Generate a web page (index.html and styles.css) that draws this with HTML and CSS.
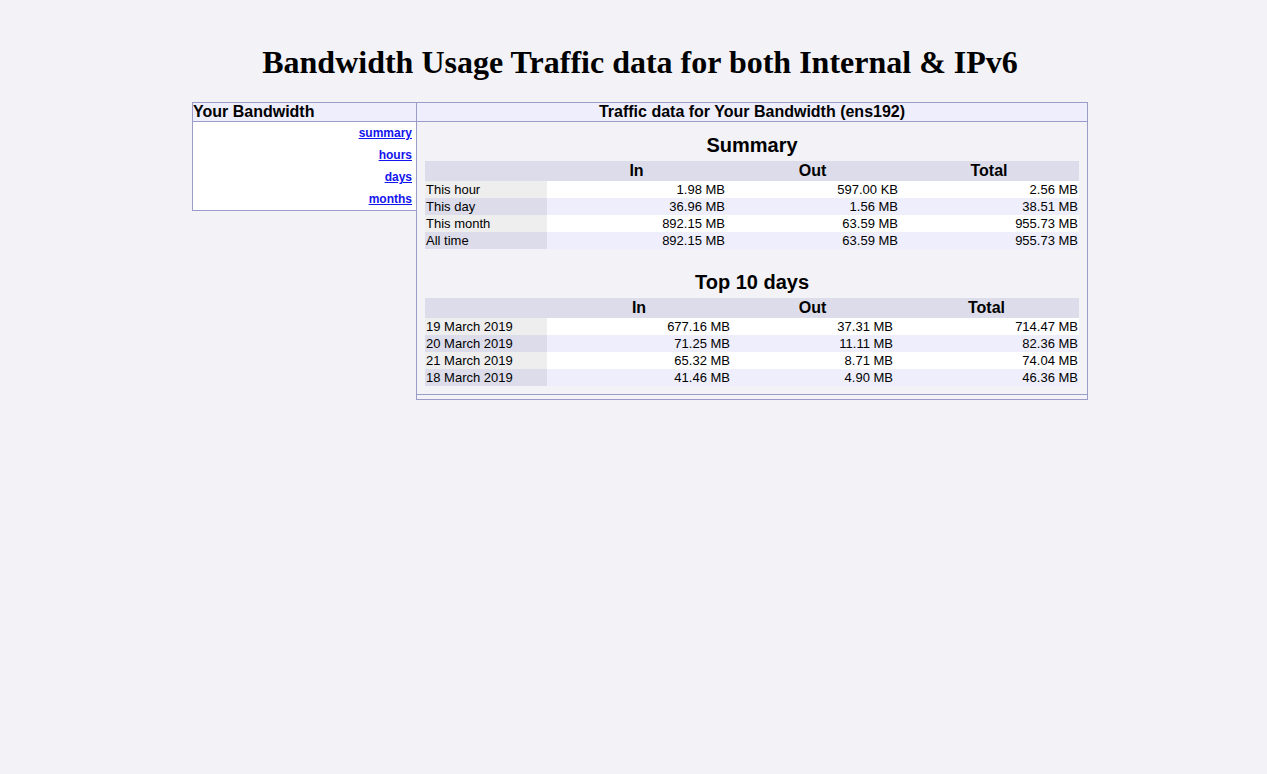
FILE: index.html
```html
<!DOCTYPE html>
<html>
<head>
<meta charset="utf-8">
<title>Bandwidth Usage</title>
<link rel="stylesheet" href="styles.css">
</head>
<body>
<div class="wrap">
  <h1 class="title">Bandwidth Usage Traffic data for both Internal &amp; IPv6</h1>
  <div class="layout">
    <div class="side">
      <div class="side-head">Your Bandwidth</div>
      <div class="nav">
        <div class="nav-item"><a href="#">summary</a></div>
        <div class="nav-item"><a href="#">hours</a></div>
        <div class="nav-item"><a href="#">days</a></div>
        <div class="nav-item"><a href="#">months</a></div>
      </div>
    </div>
    <div class="main">
      <div class="main-head">Traffic data for Your Bandwidth (ens192)</div>
      <div class="content">
        <h2 class="sect first">Summary</h2>
        <table class="data sum">
          <colgroup><col class="c-label"><col class="c-in"><col class="c-out"><col class="c-total"></colgroup>
          <thead><tr><th></th><th>In</th><th>Out</th><th>Total</th></tr></thead>
          <tbody>
            <tr class="odd"><td class="label">This hour</td><td>1.98 MB</td><td>597.00 KB</td><td>2.56 MB</td></tr>
            <tr class="even"><td class="label">This day</td><td>36.96 MB</td><td>1.56 MB</td><td>38.51 MB</td></tr>
            <tr class="odd"><td class="label">This month</td><td>892.15 MB</td><td>63.59 MB</td><td>955.73 MB</td></tr>
            <tr class="even"><td class="label">All time</td><td>892.15 MB</td><td>63.59 MB</td><td>955.73 MB</td></tr>
          </tbody>
        </table>
        <h2 class="sect">Top 10 days</h2>
        <table class="data top">
          <colgroup><col class="c-label"><col class="c-in"><col class="c-out"><col class="c-total"></colgroup>
          <thead><tr><th></th><th>In</th><th>Out</th><th>Total</th></tr></thead>
          <tbody>
            <tr class="odd"><td class="label">19 March 2019</td><td>677.16 MB</td><td>37.31 MB</td><td>714.47 MB</td></tr>
            <tr class="even"><td class="label">20 March 2019</td><td>71.25 MB</td><td>11.11 MB</td><td>82.36 MB</td></tr>
            <tr class="odd"><td class="label">21 March 2019</td><td>65.32 MB</td><td>8.71 MB</td><td>74.04 MB</td></tr>
            <tr class="even"><td class="label">18 March 2019</td><td>41.46 MB</td><td>4.90 MB</td><td>46.36 MB</td></tr>
          </tbody>
        </table>
      </div>
      <div class="foot"></div>
    </div>
  </div>
</div>
</body>
</html>
```
FILE: styles.css
```css
html, body {
  margin: 0;
  padding: 0;
  background: #f2f2f7;
  color: #000;
}
body {
  font-family: "Liberation Sans", Arial, sans-serif;
}
.wrap {
  width: 896px;
  margin-left: 192px;
  padding-top: 44px;
}
.title {
  font-family: "Liberation Serif", "Times New Roman", serif;
  font-weight: bold;
  font-size: 32px;
  line-height: 37px;
  text-align: center;
  margin: 0 0 21px;
}
.layout {
  display: flex;
  align-items: flex-start;
}
.side {
  width: 223px;
  border: 1px solid #9c9cc8;
  border-right: none;
  background: #fff;
}
.side-head {
  height: 18px;
  line-height: 18px;
  font-size: 16px;
  font-weight: bold;
  background: #eeeefc;
  border-bottom: 1px solid #9c9cc8;
}
.nav-item {
  height: 22px;
  line-height: 22px;
  text-align: right;
  padding-right: 4px;
  font-size: 12px;
  font-weight: bold;
}
.nav-item a {
  color: #1414ee;
  text-decoration: underline;
}
.main {
  width: 670px;
  border: 1px solid #9c9cc8;
}
.main-head {
  height: 18px;
  line-height: 18px;
  font-size: 16px;
  font-weight: bold;
  text-align: center;
  background: #eeeefc;
  border-bottom: 1px solid #9c9cc8;
}
.content {
  padding: 8px;
  border-bottom: 1px solid #9c9cc8;
}
.foot {
  height: 4px;
}
.sect {
  font-size: 20px;
  line-height: 24px;
  font-weight: bold;
  text-align: center;
  margin: 21px 0 4px;
}
.sect.first {
  margin-top: 3px;
}
.data {
  width: 654px;
  border-collapse: collapse;
  table-layout: fixed;
  font-size: 13px;
}
.data th {
  height: 20px;
  padding: 0;
  font-size: 16px;
  line-height: 20px;
  font-weight: bold;
  text-align: center;
  background: #dcdcea;
}
.data td {
  height: 17px;
  line-height: 17px;
  padding: 0 1px;
  text-align: right;
}
.data td.label {
  text-align: left;
}
.data tr.odd td { background: #fff; }
.data tr.even td { background: #eeeefc; }
.data tr.odd td.label { background: #eeeeee; }
.data tr.even td.label { background: #dcdcea; }
.c-label { width: 122px; }
.sum .c-in { width: 179px; }
.sum .c-out { width: 173px; }
.sum .c-total { width: 180px; }
.top .c-in { width: 184px; }
.top .c-out { width: 163px; }
.top .c-total { width: 185px; }
```
